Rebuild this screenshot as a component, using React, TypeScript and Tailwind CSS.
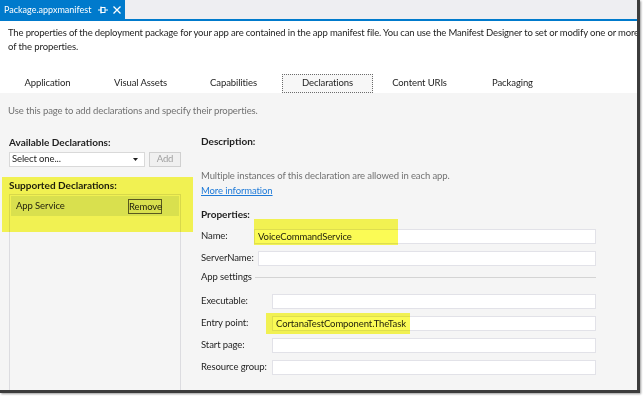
import React from "react";

const font = { fontFamily: 'Lato, "Open Sans", sans-serif' };

function Field({
  label,
  labelW,
  value,
  mark,
}: {
  label: string;
  labelW: string;
  value?: string;
  mark?: string;
}) {
  return (
    <div className="flex items-center h-[15px] mt-[7px]">
      <div className={`${labelW} shrink-0 whitespace-nowrap text-[#1e1e1e]`}>{label}</div>
      <div className="relative flex-1 h-[15px]">
        {mark && (
          <div className={`absolute ${mark} bg-[#fbfb55] mix-blend-multiply z-10 pointer-events-none`} />
        )}
        <div className="h-full bg-white border border-[#e2e2e8] px-[3px] leading-[13px] text-[#1e1e1e]">
          {value}
        </div>
      </div>
    </div>
  );
}

export default function App() {
  return (
    <div className="w-[644px] h-[398px] bg-white" style={font}>
      <div className="w-[640px] h-[393px] bg-[#f5f5f5] flex flex-col overflow-hidden text-[9.5px] tracking-[-0.1px] border-r-[3px] border-b-[3px] border-[#3c3c3c] shadow-[1px_1px_2px_rgba(0,0,0,0.4)]">
        {/* document tab strip */}
        <div className="h-[19px] bg-[#eeeef2] flex shrink-0">
          <div className="w-[125px] bg-[#007acc] text-white flex items-center pl-[4px] text-[9px] tracking-normal whitespace-nowrap">
            <span>Package.appxmanifest</span>
            <svg width="10" height="8" viewBox="0 0 10 8" className="ml-[7px] shrink-0">
              <rect x="3" y="1.5" width="4" height="5" fill="none" stroke="white" strokeWidth="1" />
              <line x1="7" y1="4" x2="10" y2="4" stroke="white" strokeWidth="1" />
              <line x1="0" y1="4" x2="3" y2="4" stroke="white" strokeWidth="1" />
              <line x1="3" y1="0.5" x2="3" y2="7.5" stroke="white" strokeWidth="1" />
            </svg>
            <svg width="8" height="8" viewBox="0 0 8 8" className="ml-[5px] shrink-0">
              <path d="M0.5 0.5 L7.5 7.5 M7.5 0.5 L0.5 7.5" stroke="white" strokeWidth="1.3" />
            </svg>
          </div>
        </div>
        <div className="h-[2px] bg-[#007acc] shrink-0" />

        {/* header */}
        <div className="bg-white h-[72px] shrink-0 flex flex-col">
          <div className="pl-[8px] pt-[5px] leading-[14px] text-[#1e1e1e]">
            <div className="whitespace-nowrap tracking-[-0.16px]">
              The properties of the deployment package for your app are contained in the app manifest file. You can use the Manifest Designer to set or modify one or more
            </div>
            <div>of the properties.</div>
          </div>
          <div className="mt-auto flex h-[20px] text-[#1e1e1e] pl-px">
            {["Application", "Visual Assets", "Capabilities", "Declarations", "Content URIs", "Packaging"].map(
              (t) => (
                <div key={t} className="w-[93px] flex justify-center items-end">
                  {t === "Declarations" ? (
                    <div className="w-[93px] h-[19px] border border-dotted border-[#6b6b6b] bg-[#f7f7f7] flex items-center justify-center ml-[2px]">
                      {t}
                    </div>
                  ) : (
                    <div className="h-[19px] flex items-center">{t}</div>
                  )}
                </div>
              )
            )}
          </div>
        </div>

        {/* body */}
        <div className="pl-[8px] mt-[11px] leading-[14px] text-[#717171]">
          Use this page to add declarations and specify their properties.
        </div>

        <div className="flex flex-1 min-h-0">
          {/* left column */}
          <div className="relative w-[172px] ml-[9px] flex flex-col">
            <div className="absolute left-[-7px] top-[59px] w-[191px] h-[55px] bg-[#fbfb55] mix-blend-multiply z-10 pointer-events-none" />
            <div className="mt-[17px] leading-[14px] text-[10px] font-bold tracking-normal text-[#1e1e1e]">Available Declarations:</div>
            <div className="mt-[3px] flex gap-[4px] h-[15px]">
              <div className="w-[136px] bg-white border border-[#d9d9d9] flex items-center px-[2px] text-[#1e1e1e]">
                <span className="flex-1">Select one...</span>
                <svg width="5" height="3" viewBox="0 0 5 3" className="mr-[4px]">
                  <path d="M0 0 H5 L2.5 3 Z" fill="#1e1e1e" />
                </svg>
              </div>
              <div className="w-[32px] border border-[#d0d0d0] bg-[#f0f0f0] text-[#a0a0a0] flex items-center justify-center">
                Add
              </div>
            </div>
            <div className="mt-[11px] leading-[14px] text-[10px] font-bold tracking-normal text-[#1e1e1e]">Supported Declarations:</div>
            <div className="mt-[2px] flex-1 border border-b-0 border-[#dcdce0] p-px">
              <div className="h-[20px] bg-[#dde4ea] flex items-center pl-[5px] pr-[17px] text-[#1e1e1e]">
                <span className="flex-1">App Service</span>
                <span className="border border-[#5a5a5a] leading-[13px] w-[34px] text-center">Remove</span>
              </div>
            </div>
          </div>

          {/* right column */}
          <div className="w-[395px] ml-[20px] flex flex-col">
            <div className="mt-[16px] leading-[14px] text-[10px] font-bold tracking-normal text-[#1e1e1e]">Description:</div>
            <div className="mt-[20px] leading-[15px] text-[#717171]">
              Multiple instances of this declaration are allowed in each app.
            </div>
            <div className="leading-[15px] text-[#1e7ad8] underline">More information</div>
            <div className="mt-[9px] leading-[14px] text-[10px] font-bold tracking-normal text-[#1e1e1e]">Properties:</div>
            <div className="mt-px">
              <Field
                label="Name:"
                labelW="w-[53px]"
                value="VoiceCommandService"
                mark="left-0 top-[-10px] w-[144px] h-[26px]"
              />
              <Field label="ServerName:" labelW="w-[57px]" />
              <div className="flex items-center h-[20px] mt-[1px]">
                <span className="text-[#1e1e1e] w-[54px] shrink-0 whitespace-nowrap">App settings</span>
                <div className="flex-1 h-px bg-[#d4d4d4]" />
              </div>
              <Field label="Executable:" labelW="w-[71px]" />
              <Field
                label="Entry point:"
                labelW="w-[71px]"
                value="CortanaTestComponent.TheTask"
                mark="left-[-6px] top-[-3px] w-[144px] h-[21px]"
              />
              <Field label="Start page:" labelW="w-[71px]" />
              <Field label="Resource group:" labelW="w-[71px]" />
            </div>
          </div>
        </div>
      </div>
    </div>
  );
}
